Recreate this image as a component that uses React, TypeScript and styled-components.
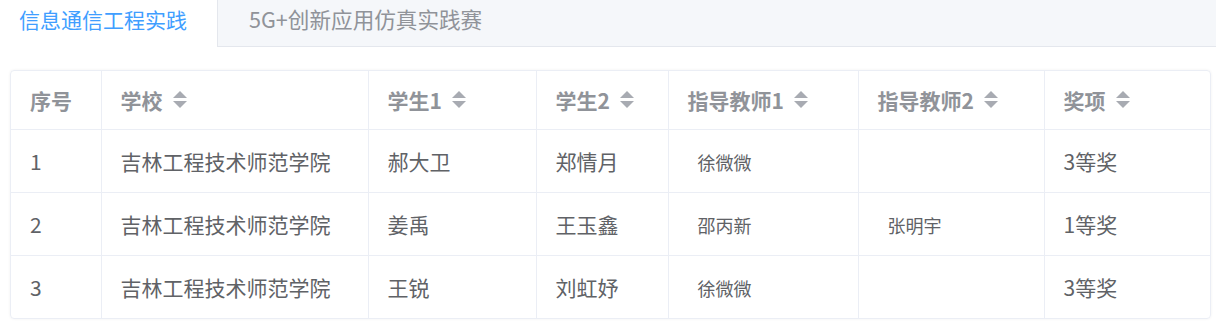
import React from 'react';
import styled, { createGlobalStyle } from 'styled-components';

const GlobalStyle = createGlobalStyle`
  html, body {
    margin: 0;
    padding: 0;
    background: #fff;
  }
  body {
    font-family: "Noto Sans CJK SC", "Noto Sans", sans-serif;
  }
`;

const Page = styled.div`
  width: 1216px;
  height: 326px;
  overflow: hidden;
  background: #fff;
`;

const TabBar = styled.div`
  display: flex;
  height: 47px;
`;

const Tab = styled.div<{ $active?: boolean }>`
  box-sizing: border-box;
  height: 47px;
  display: flex;
  align-items: flex-start;
  padding: ${p => (p.$active ? '4px 0 0 19px' : '4px 32px 0 31px')};
  font-size: ${p => (p.$active ? '21px' : '21.6px')};
  line-height: 30px;
  white-space: nowrap;
  color: ${p => (p.$active ? '#409eff' : '#909399')};
  background: ${p => (p.$active ? '#fff' : '#f5f7fa')};
  border-left: ${p => (p.$active ? 'none' : '1px solid #e4e7ed')};
  border-bottom: ${p => (p.$active ? 'none' : '1px solid #e4e7ed')};
  flex: ${p => (p.$active ? '0 0 217px' : '1 1 auto')};
`;

const Content = styled.div`
  padding: 23px 5px 0 10px;
`;

const TableBox = styled.div`
  width: 1201px;
  box-sizing: border-box;
  border: 1px solid #ebeef5;
  border-radius: 4px;
  box-shadow: 0 0 3px rgba(0, 0, 0, 0.06);
  overflow: hidden;
`;

const Table = styled.table`
  width: 1199px;
  table-layout: fixed;
  border-collapse: collapse;
  border-spacing: 0;
`;

const HeadCell = styled.th`
  box-sizing: border-box;
  height: 58px;
  padding: 0 0 0 19px;
  text-align: left;
  font-size: 21px;
  font-weight: 700;
  color: #909399;
  border-right: 1px solid #ebeef5;
  border-bottom: 1px solid #ebeef5;
  white-space: nowrap;

  &:last-child {
    border-right: none;
  }
`;

const HeadInner = styled.span`
  display: inline-flex;
  align-items: center;
  gap: 10px;
`;

const Row = styled.tr`
  &:last-child td {
    border-bottom: none;
  }
`;

const Cell = styled.td`
  box-sizing: border-box;
  height: 63px;
  padding: 0 0 0 19px;
  font-size: 21px;
  color: #606266;
  border-right: 1px solid #ebeef5;
  border-bottom: 1px solid #ebeef5;
  white-space: nowrap;

  &:last-child {
    border-right: none;
  }
`;

const TeacherName = styled.span`
  display: inline-block;
  padding-left: 10px;
  font-size: 18px;
  color: #606266;
`;

const SortIcon = () => (
  <svg width="14" height="17" viewBox="0 0 14 17">
    <polygon points="0,7 7,0 14,7" fill="#a8abb2" />
    <polygon points="0,10 14,10 7,17" fill="#a8abb2" />
  </svg>
);

const columns = [
  { title: '序号', width: 90, sortable: false },
  { title: '学校', width: 267, sortable: true },
  { title: '学生1', width: 168, sortable: true },
  { title: '学生2', width: 132, sortable: true },
  { title: '指导教师1', width: 190, sortable: true },
  { title: '指导教师2', width: 186, sortable: true },
  { title: '奖项', width: 166, sortable: true },
];

const rows = [
  { no: '1', school: '吉林工程技术师范学院', s1: '郝大卫', s2: '郑情月', t1: '徐微微', t2: '', award: '3等奖' },
  { no: '2', school: '吉林工程技术师范学院', s1: '姜禹', s2: '王玉鑫', t1: '邵丙新', t2: '张明宇', award: '1等奖' },
  { no: '3', school: '吉林工程技术师范学院', s1: '王锐', s2: '刘虹妤', t1: '徐微微', t2: '', award: '3等奖' },
];

export default function App() {
  return (
    <Page>
      <GlobalStyle />
      <TabBar>
        <Tab $active>信息通信工程实践</Tab>
        <Tab>5G+创新应用仿真实践赛</Tab>
      </TabBar>
      <Content>
        <TableBox>
          <Table>
            <colgroup>
              {columns.map(c => (
                <col key={c.title} style={{ width: c.width }} />
              ))}
            </colgroup>
            <thead>
              <tr>
                {columns.map(c => (
                  <HeadCell key={c.title}>
                    <HeadInner>
                      {c.title}
                      {c.sortable && <SortIcon />}
                    </HeadInner>
                  </HeadCell>
                ))}
              </tr>
            </thead>
            <tbody>
              {rows.map(r => (
                <Row key={r.no}>
                  <Cell>{r.no}</Cell>
                  <Cell>{r.school}</Cell>
                  <Cell>{r.s1}</Cell>
                  <Cell>{r.s2}</Cell>
                  <Cell>{r.t1 && <TeacherName>{r.t1}</TeacherName>}</Cell>
                  <Cell>{r.t2 && <TeacherName>{r.t2}</TeacherName>}</Cell>
                  <Cell>{r.award}</Cell>
                </Row>
              ))}
            </tbody>
          </Table>
        </TableBox>
      </Content>
    </Page>
  );
}
